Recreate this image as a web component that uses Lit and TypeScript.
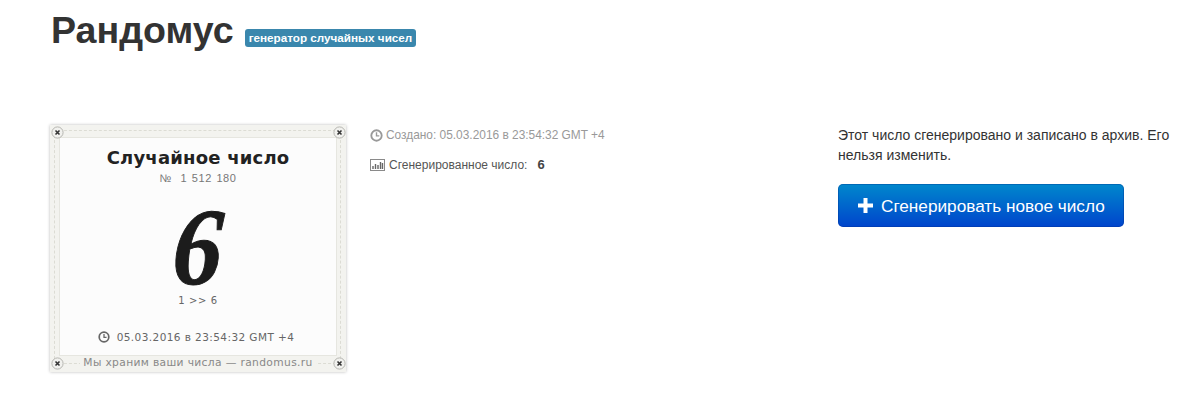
import { LitElement, html, css, svg } from "lit";
import { customElement } from "lit/decorators.js";

const clock = (size: number) => html`<svg width=${size} height=${size} viewBox="0 0 14 14" fill="none" stroke="currentColor"><circle cx="7" cy="7" r="5.6" stroke-width="2"/><path d="M7 3.6V7.4H10" stroke-width="1.5"/></svg>`;
const bars = html`<svg width="15" height="12" viewBox="0 0 15 12" fill="none"><rect x=".5" y=".5" width="14" height="11" stroke="#8a8a8a"/><path d="M3 10V7M5.500 10V5M8 10V6M10.500 10V3M12.500 10V4" stroke="#666" stroke-width="1.4"/></svg>`;
const screw = svg`<svg width="13" height="13" viewBox="0 0 13 13"><circle cx="6.5" cy="6.5" r="5.6" fill="#f1f1ee" stroke="#b5b5b0"/><path d="M4.500 4.500L8.500 8.500M8.500 4.500L4.500 8.500" stroke="#333" stroke-width="1.6"/></svg>`;

@customElement("app-root")
export class AppRoot extends LitElement {
  static styles = css`
    :host { display: block; width: 1200px; height: 420px; background: #fff; overflow: hidden; font-family: "Liberation Sans", Arial, sans-serif; color: #333; }
    .page { padding: 8px 0 0 50px; }
    .head { display: flex; align-items: center; gap: 11px; height: 44px; }
    h1 { margin: 0 0 0 1px; font-size: 37.6px; line-height: 44px; font-weight: 700; color: #333; }
    .label { margin-top: 16px; background: #3a87ad; color: #fff; font-size: 11.7px; font-weight: 700; line-height: 14px; padding: 2px 4px 2px; border-radius: 3px; white-space: nowrap; }
    .row { display: flex; margin-top: 73px; align-items: flex-start; }
    .card { position: relative; box-sizing: border-box; width: 296px; height: 247px; background: #f3f3ef; box-shadow: 0 0 3px #bbb; display: flex; flex-direction: column; padding: 12px 9px 0; flex: none; }
    .stitch { position: absolute; inset: 5px 5px 8px 4px; border: 1px dashed #dcdcd4; pointer-events: none; }
    .sheet { position: relative; background: #fcfcfc; height: 219px; border: 1px solid #e6e6e0; box-sizing: border-box; display: flex; flex-direction: column; align-items: center; font-family: "DejaVu Sans", sans-serif; }
    .t { font-size: 18px; font-weight: 700; line-height: 22px; margin-top: 9px; color: #222; letter-spacing: .2px; }
    .n { font-size: 11px; line-height: 14px; margin-top: 2px; color: #777; letter-spacing: .55px; font-family: "Liberation Sans", sans-serif; word-spacing: 1px; }
    .n span { margin-right: 4px; }
    .big { width: 100%; text-align: center; font-family: "Liberation Serif", serif; font-style: italic; font-weight: 700; font-size: 110px; line-height: 90px; height: 90px; margin-top: 17px; color: #1c1c1c; transform: scaleX(.9) skewX(-4deg); -webkit-text-stroke: 1px #1c1c1c; }
    .range { font-size: 10px; line-height: 14px; margin-top: 2px; color: #666; letter-spacing: .6px; }
    .date { display: flex; align-items: center; gap: 7px; font-size: 10.5px; line-height: 14px; margin-top: 22px; color: #666; letter-spacing: .42px; margin-left: -4px; }
    .foot { position: relative; text-align: center; font-family: "DejaVu Sans", sans-serif; font-size: 10.7px; line-height: 13px; color: #888; letter-spacing: .35px; }
    .foot span { background: #f3f3ef; padding: 0 3px; }
    .screw { position: absolute; width: 13px; height: 13px; line-height: 0; }
    .tl { left: 1px; top: 1px; } .tr { right: 0; top: 1px; } .bl { left: 1px; bottom: 2px; } .br { right: 0; bottom: 2px; }
    .info { width: 492px; padding: 2px 0 0 24px; box-sizing: border-box; font-size: 11.9px; flex: none; }
    .info div { display: flex; align-items: center; gap: 3px; line-height: 16px; }
    .created { color: #999; }
    .gen { margin-top: 14px; color: #555; font-size: 12px; }
    .info .gen { gap: 4px; }
    .gen b { margin-left: 6px; color: #444; font-size: 13px; }
    .side { width: 340px; font-size: 14px; line-height: 20px; color: #333; }
    p { margin: 0; }
    .btn { margin-top: 19px; display: flex; align-items: center; gap: 8px; width: 286px; height: 43px; box-sizing: border-box; padding-left: 20px; border-radius: 5px; color: #fff; font-size: 17.2px; background: linear-gradient(#0088cc, #0044cc); box-shadow: inset 0 0 0 1px rgba(0,50,140,.35); }
    .btn svg { flex: none; }
  `;

  render() {
    return html`<div class="page">
      <div class="head"><h1>Рандомус</h1><span class="label">генератор случайных чисел</span></div>
      <div class="row">
        <div class="card">
          <div class="stitch"></div>
          <div class="sheet">
            <div class="t">Случайное число</div>
            <div class="n"><span>№</span> 1 512 180</div>
            <div class="big">6</div>
            <div class="range">1 &gt;&gt; 6</div>
            <div class="date">${clock(12)}05.03.2016 в 23:54:32 GMT +4</div>
          </div>
          <div class="foot"><span>Мы храним ваши числа — randomus.ru</span></div>
          <span class="screw tl">${screw}</span><span class="screw tr">${screw}</span>
          <span class="screw bl">${screw}</span><span class="screw br">${screw}</span>
        </div>
        <div class="info">
          <div class="created">${clock(13)}Создано: 05.03.2016 в 23:54:32 GMT +4</div>
          <div class="gen">${bars}Сгенерированное число: <b>6</b></div>
        </div>
        <div class="side">
          <p>Этот число сгенерировано и записано в архив. Его нельзя изменить.</p>
          <div class="btn"><svg width="15" height="15" viewBox="0 0 15 15"><path d="M5.500 0h4v5.500H15v4H9.500V15h-4V9.500H0v-4h5.500z" fill="#fff"/></svg>Сгенерировать новое число</div>
        </div>
      </div>
    </div>`;
  }
}
